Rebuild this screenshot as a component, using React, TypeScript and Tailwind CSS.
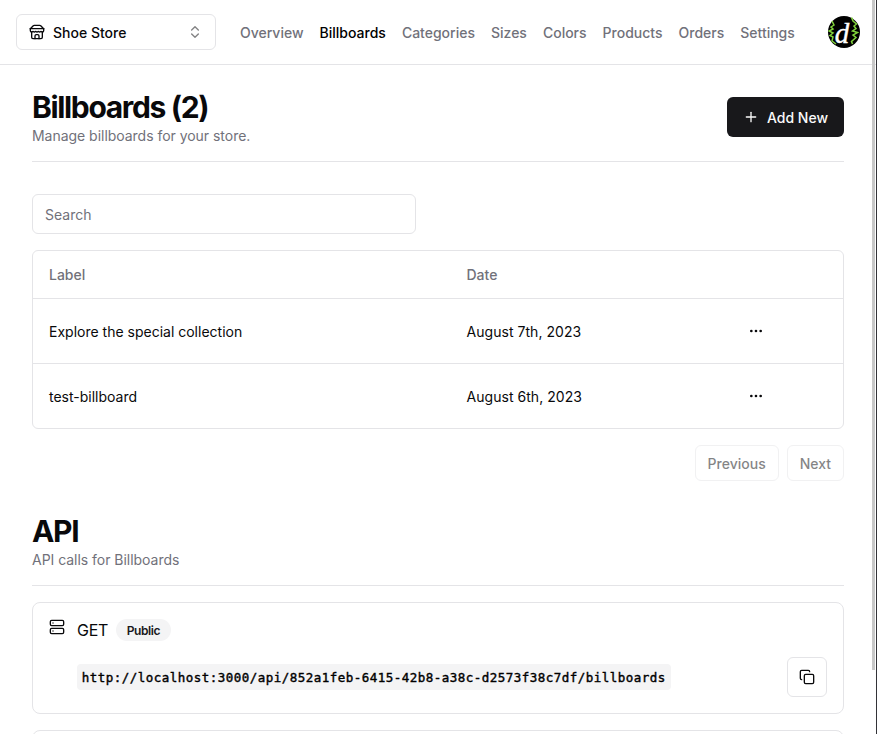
import React from "react";
import { ChevronsUpDown, Copy, MoreHorizontal, Plus, Server } from "lucide-react";

const links = ["Overview", "Billboards", "Categories", "Sizes", "Colors", "Products", "Orders", "Settings"];

const rows = [
  { label: "Explore the special collection", date: "August 7th, 2023" },
  { label: "test-billboard", date: "August 6th, 2023" },
];

function StoreIcon() {
  return (
    <svg className="mr-2 h-4 w-4" viewBox="0 0 24 24" fill="none" stroke="currentColor" strokeWidth="2" strokeLinecap="round" strokeLinejoin="round">
      <path d="m2 7 4.41-4.41A2 2 0 0 1 7.83 2h8.34a2 2 0 0 1 1.42.59L22 7" />
      <path d="M4 12v8a2 2 0 0 0 2 2h12a2 2 0 0 0 2-2v-8" />
      <path d="M15 22v-4a2 2 0 0 0-2-2h-2a2 2 0 0 0-2 2v4" />
      <path d="M2 7h20" />
      <path d="M22 7v3a2 2 0 0 1-2 2a2.7 2.7 0 0 1-1.59-.63.7.7 0 0 0-.82 0A2.7 2.7 0 0 1 16 12a2.7 2.7 0 0 1-1.59-.63.7.7 0 0 0-.82 0A2.7 2.7 0 0 1 12 12a2.7 2.7 0 0 1-1.59-.63.7.7 0 0 0-.82 0A2.7 2.7 0 0 1 8 12a2.7 2.7 0 0 1-1.59-.63.7.7 0 0 0-.82 0A2.7 2.7 0 0 1 4 12a2 2 0 0 1-2-2V7" />
    </svg>
  );
}

function Avatar() {
  return (
    <div className="relative ml-auto flex h-8 w-8 items-center justify-center rounded-full bg-black">
      <svg className="absolute inset-0 h-8 w-8" viewBox="0 0 32 32" fill="none" stroke="#7fd13b" strokeWidth="1.5">
        <path d="M4 5l2 4-3 2 2 2-4 2 4 2-3 2.5 3 1.5-1 4 4 3" />
        <path d="M23.5 1.5l1.5 3.5 3.5 3-2.5 2 2 2.5-3.5 2.5 5 1.5-4.5 2.5 3 2.5-4.5 4 1 2.5" />
      </svg>
      <span className="relative pt-0.5 pr-1 font-['Liberation_Serif',serif] text-[29px] leading-[28px] text-white italic [-webkit-text-stroke:0.4px_white]">d</span>
    </div>
  );
}

function Heading({ title, description }: { title: string; description: string }) {
  return (
    <div>
      <h2 className="text-3xl font-bold tracking-[-1.35px]">{title}</h2>
      <p className="-mb-px pt-px text-sm tracking-[-0.03px] text-[#71717a]">{description}</p>
    </div>
  );
}

function Navbar() {
  return (
    <header className="flex h-[65px] items-center border-b border-[#e4e4e7] px-4">
      <button className="flex h-9 w-[200px] items-center rounded-md border border-[#e4e4e7] px-3 text-sm font-medium">
        <StoreIcon />
        <span className="pt-0.5">Shoe Store</span>
        <ChevronsUpDown className="ml-auto h-4 w-4 opacity-50" />
      </button>
      <nav className="ml-6 flex items-center gap-4 pt-0.5">
        {links.map((l) => (
          <a key={l} className={l === "Billboards" ? "text-sm font-medium text-black" : "text-sm font-medium text-[#71717a]"}>
            {l}
          </a>
        ))}
      </nav>
      <Avatar />
    </header>
  );
}

function BillboardTable() {
  return (
    <div className="rounded-md border border-[#e4e4e7] text-sm">
      <div className="grid h-12 grid-cols-[417.5px_273.5px_1fr] items-center border-b border-[#e4e4e7] font-medium text-[#71717a]">
        <span className="px-4">Label</span>
        <span className="px-4">Date</span>
      </div>
      {rows.map((r) => (
        <div key={r.label} className="grid grid-cols-[417.5px_273.5px_1fr] items-center border-b border-[#e4e4e7] last:border-b-0">
          <span className="px-4 pt-0.5">{r.label}</span>
          <span className="px-4 pt-0.5 tracking-[0.04px]">{r.date}</span>
          <div className="p-4">
            <button className="flex h-8 w-8 items-center justify-center">
              <MoreHorizontal className="h-4 w-4" />
            </button>
          </div>
        </div>
      ))}
    </div>
  );
}

export default function App() {
  return (
    <div className="relative h-[734px] w-[877px] overflow-hidden bg-white font-[Inter,sans-serif] text-[#09090b]">
      <div className="w-[876px]">
        <Navbar />
        <main className="flex flex-col gap-4 px-8 pt-6">
          <div className="flex items-center justify-between">
            <Heading title="Billboards (2)" description="Manage billboards for your store." />
            <button className="flex h-10 items-center rounded-md bg-[#18181b] px-4 text-sm font-medium text-[#fafafa]">
              <Plus className="mr-2 h-4 w-4" />
              <span className="pt-0.5">Add New</span>
            </button>
          </div>
          <hr className="border-[#e4e4e7]" />
          <div>
            <div className="py-4">
              <input placeholder="Search" className="block h-10 w-96 rounded-md border border-[#e4e4e7] px-3 text-sm placeholder:text-[#71717a]" />
            </div>
            <BillboardTable />
            <div className="flex justify-end gap-2 py-4">
              <button className="h-9 rounded-md border border-[#e4e4e7] px-3 pt-0.5 text-sm font-medium opacity-50">Previous</button>
              <button className="h-9 rounded-md border border-[#e4e4e7] px-3 pt-0.5 text-sm font-medium opacity-50">Next</button>
            </div>
          </div>
          <Heading title="API" description="API calls for Billboards" />
          <hr className="border-[#e4e4e7]" />
          <div className="flex h-28 gap-3 rounded-lg border border-[#e4e4e7] p-4">
            <Server className="h-4 w-4 shrink-0" />
            <div className="flex flex-1 flex-col gap-4">
              <div className="flex h-[22px] items-center gap-2">
                <span className="text-base tracking-[-0.25px]">GET</span>
                <span className="flex h-[22px] items-center rounded-full bg-[#f4f4f5] px-[10.5px] pt-0.5 text-xs leading-4 font-semibold tracking-[-0.4px] text-[#18181b]">Public</span>
              </div>
              <div className="flex h-10 items-center justify-between">
                <code className="flex h-[26px] w-[594px] items-center rounded bg-[#f4f4f5] px-[4.8px] pt-0.5 font-['DejaVu_Sans_Mono',monospace] text-[12.5px] tracking-[0.475px] whitespace-nowrap text-black [-webkit-text-stroke:0.4px_black]">
                  http://localhost:3000/api/852a1feb-6415-42b8-a38c-d2573f38c7df/billboards
                </code>
                <button className="flex h-10 w-10 items-center justify-center rounded-md border border-[#e4e4e7]">
                  <Copy className="h-4 w-4" />
                </button>
              </div>
            </div>
          </div>
          <div className="h-28 rounded-lg border border-[#e4e4e7]" />
        </main>
      </div>
      <div className="absolute top-0 left-[872px] h-[670px] w-[3px] bg-[#c8c8c8]" />
      <div className="absolute top-0 right-0 h-full w-px bg-[#333338]" />
    </div>
  );
}
